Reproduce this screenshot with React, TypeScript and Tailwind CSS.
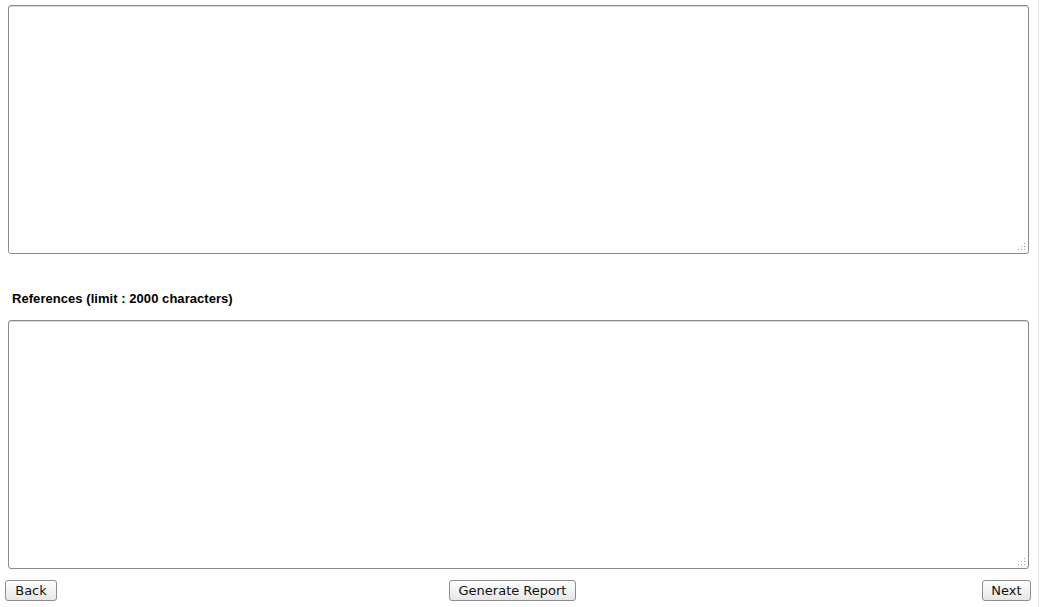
import React from "react";

function Grip() {
  return (
    <svg width="10" height="10" viewBox="0 0 10 10" className="absolute right-[3px] bottom-[3px]" shapeRendering="crispEdges">
      {[
        [8, 2], [8, 5], [5, 5], [8, 8], [5, 8], [2, 8],
      ].map(([x, y], i) => (
        <rect key={i} x={x} y={y} width="1" height="1" fill="#9a9a9a" />
      ))}
    </svg>
  );
}

function Area() {
  return (
    <div className="relative w-[1021px] h-[249px]">
      <textarea className="block w-full h-full resize-none rounded-[3px] border border-[#8a8a8a] bg-white outline-none shadow-[inset_0_1px_0_#d8d8d8]" />
      <Grip />
    </div>
  );
}

function Btn({ children, w, className = "" }: { children: React.ReactNode; w: string; className?: string }) {
  return (
    <button
      className={`${w} ${className} h-[21px] rounded-[3px] border border-[#8c8c8c] bg-gradient-to-b from-white to-[#e6e6e6] text-[13px] leading-none text-[#111] flex items-center justify-center`}
      style={{ fontFamily: '"DejaVu Sans", sans-serif' }}
    >
      {children}
    </button>
  );
}

export default function App() {
  return (
    <div className="relative w-[1040px] h-[607px] bg-white overflow-hidden">
      <div className="absolute right-[1px] top-0 bottom-0 w-px bg-[#e3e3e3]" />
      <div className="pt-[5px] pl-[8px]">
        <Area />
        <div
          className="pt-[38px] pl-[4px] h-[66px] text-[13px] font-bold text-black leading-none tracking-[0.05px]"
          style={{ fontFamily: '"Liberation Sans", Arial, sans-serif' }}
        >
          References (limit : 2000 characters)
        </div>
        <Area />
      </div>
      <div className="mt-[11px] pl-[5px] pr-[9px] flex items-center">
        <Btn w="w-[52px]">Back</Btn>
        <Btn w="w-[127px]" className="ml-[392px]">Generate Report</Btn>
        <Btn w="w-[49px]" className="ml-auto">Next</Btn>
      </div>
    </div>
  );
}
